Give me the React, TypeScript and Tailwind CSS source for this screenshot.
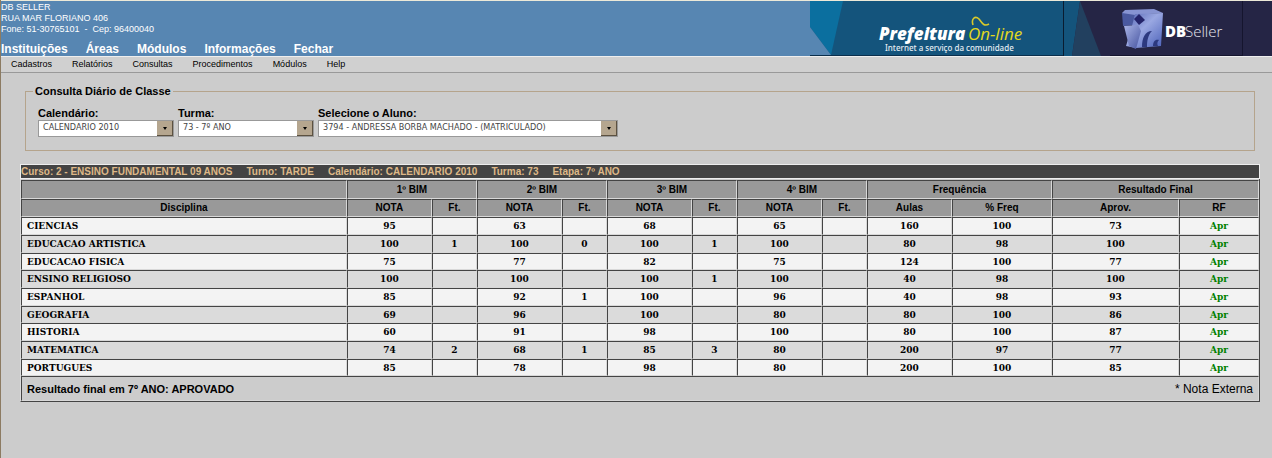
import React from "react";

const mainMenu = ["Instituições", "Áreas", "Módulos", "Informações", "Fechar"];
const subMenu = ["Cadastros", "Relatórios", "Consultas", "Procedimentos", "Módulos", "Help"];

const terms = ["1º BIM", "2º BIM", "3º BIM", "4º BIM"];

const rows: string[][] = [
  ["CIENCIAS", "95", "", "63", "", "68", "", "65", "", "160", "100", "73"],
  ["EDUCACAO ARTISTICA", "100", "1", "100", "0", "100", "1", "100", "", "80", "98", "100"],
  ["EDUCACAO FISICA", "75", "", "77", "", "82", "", "75", "", "124", "100", "77"],
  ["ENSINO RELIGIOSO", "100", "", "100", "", "100", "1", "100", "", "40", "98", "100"],
  ["ESPANHOL", "85", "", "92", "1", "100", "", "96", "", "40", "98", "93"],
  ["GEOGRAFIA", "69", "", "96", "", "100", "", "80", "", "80", "100", "86"],
  ["HISTORIA", "60", "", "91", "", "98", "", "100", "", "80", "100", "87"],
  ["MATEMATICA", "74", "2", "68", "1", "85", "3", "80", "", "200", "97", "77"],
  ["PORTUGUES", "85", "", "78", "", "98", "", "80", "", "200", "100", "85"],
];

const courseInfo = [
  "Curso: 2 - ENSINO FUNDAMENTAL 09 ANOS",
  "Turno: TARDE",
  "Calendário: CALENDARIO 2010",
  "Turma: 73",
  "Etapa: 7º ANO",
];

const cell = "border border-t-[#444] border-l-[#444] border-r-[#d8d8d8] border-b-[#d8d8d8] p-0";

function PrefeituraBanner() {
  return (
    <svg width="254" height="55" viewBox="0 0 254 55" className="block shrink-0">
      <rect width="254" height="55" fill="#14547c" />
      <path d="M0 0H33L21 54L0 26Z" fill="#0b6f9f" />
      <path d="M0 26L21 54V55H0Z" fill="#5786b2" />
      <path d="M0 54.5H254" stroke="#0b2f4c" />
      <path d="M253.5 0V55" stroke="#0a1c30" />
      <text x="69" y="39" fill="#fff" fontFamily="'Open Sans', sans-serif" fontSize="17" fontWeight="800" fontStyle="italic">
        Prefeitura
      </text>
      <text x="158" y="39" fill="#e3d91c" fontFamily="'Open Sans', sans-serif" fontSize="17" fontStyle="italic">
        On-line
      </text>
      <path d="M163 24C161 18 165 14 169 18C172 22 174 26 179 23" fill="none" stroke="#d9c92a" strokeWidth="1.6" />
      <text x="75" y="50" fill="#e4edf3" fontFamily="'Noto Sans', sans-serif" fontSize="8" fontWeight="500">
        Internet a serviço da comunidade
      </text>
    </svg>
  );
}

function DbSellerBanner() {
  return (
    <svg width="208" height="55" viewBox="0 0 208 55" className="block shrink-0">
      <defs>
        <linearGradient id="cube" x1="0" y1="0" x2="1" y2="1">
          <stop offset="0" stopColor="#5262b0" />
          <stop offset="0.45" stopColor="#9aa8e2" />
          <stop offset="1" stopColor="#4a60b8" />
        </linearGradient>
        <linearGradient id="side" x1="0" y1="0" x2="1" y2="1">
          <stop offset="0" stopColor="#a9b4e6" />
          <stop offset="1" stopColor="#4654a0" />
        </linearGradient>
      </defs>
      <rect width="208" height="55" fill="#252545" />
      <path d="M0 0H16L8 55H0Z" fill="#14547c" />
      <path d="M16 0L37 55H8Z" fill="#22405f" />
      <path d="M178.500 0V55M46 54.500H179" stroke="#15152e" />
      <path d="M58 12L71 10V24L59 25Z" fill="#4a599f" />
      <path d="M58 12L61 9L90 8L99 12L71 14Z" fill="#8794d2" />
      <path d="M71 13L99 12L97 45L72 47L62 45L68 25Z" fill="url(#cube)" />
      <path d="M60 25L74 24L77 30L72 48L65 45Z" fill="url(#side)" />
      <path d="M75 13L81 19L75 24L70 18Z" fill="#24246a" />
      <path d="M78 46C78 37 81 30 88 30C84 34 83 40 83 46ZM89 45C89 41 91 38 95 39C93 41 93 43 94 45Z" fill="#2c397f" />
      <text x="101" y="36" fill="#fff" fontFamily="'Open Sans', sans-serif" fontSize="15" fontWeight="800">
        DB
      </text>
      <text x="121" y="36" fill="#e6e6ee" fontFamily="'Open Sans', sans-serif" fontSize="15" fontWeight="300">
        Seller
      </text>
    </svg>
  );
}

function SelectField({ id, label, value, width }: { id: string; label: string; value: string; width: string }) {
  return (
    <div className={width}>
      <label htmlFor={id} className="block text-[11px] leading-[13px] font-bold">
        {label}
      </label>
      <div className="relative">
        <select
          id={id}
          defaultValue={value}
          className="block h-[17px] w-full appearance-none rounded-none border border-[#999] bg-white pr-4 pb-[3px] pl-1 font-['DejaVu_Sans_Condensed','DejaVu_Sans',sans-serif] text-[9px] leading-[12px] text-[#444]"
        >
          <option>{value}</option>
        </select>
        <span className="pointer-events-none absolute top-px right-px flex h-[15px] w-4 items-center justify-center border-r border-b border-[#5c5140] bg-[#b5a68f]">
          <svg width="4" height="3" viewBox="0 0 4 3">
            <path d="M0 0H4L2 3Z" fill="#000" />
          </svg>
        </span>
      </div>
    </div>
  );
}

export default function App() {
  return (
    <div className="min-h-screen border-l border-[#8c7b62] bg-[#ccc] font-['Liberation_Sans',Arial,sans-serif] text-black">
      <header className="flex justify-between border-t border-[#ece9d8] bg-[#5786b2]">
        <div className="flex flex-col justify-between pt-px text-white">
          <address className="text-[9px] leading-[11px] whitespace-pre not-italic">
            <p>DB SELLER</p>
            <p>RUA MAR FLORIANO 406</p>
            <p>Fone: 51-30765101  -  Cep: 96400040</p>
          </address>
          <nav className="flex gap-[18px] text-[12px] leading-[14px] font-bold">
            {mainMenu.map((item) => (
              <a key={item} href="#">
                {item}
              </a>
            ))}
          </nav>
        </div>
        <div className="flex">
          <PrefeituraBanner />
          <DbSellerBanner />
        </div>
      </header>

      <nav className="flex h-[17px] gap-5 border-t border-b border-t-[#eee] border-b-[#999] bg-[#d0d0d0] pl-[10px] text-[9px] leading-[15px]">
        {subMenu.map((item) => (
          <a key={item} href="#">
            {item}
          </a>
        ))}
      </nav>

      <main className="pt-3 pr-3 pl-[19px]">
        <fieldset className="mr-[5px] ml-[5px] border border-[#b5a48c] px-3 pt-[9px] pb-[13px]">
          <legend className="-ml-[5px] px-[2px] text-[11px] leading-[13px] font-bold">Consulta Diário de Classe</legend>
          <div className="flex gap-1">
            <SelectField id="calendario" label="Calendário:" value="CALENDARIO 2010" width="w-[136px]" />
            <SelectField id="turma" label="Turma:" value="73 - 7º ANO" width="w-[136px]" />
            <SelectField id="aluno" label="Selecione o Aluno:" value="3794 - ANDRESSA BORBA MACHADO - (MATRICULADO)" width="w-[300px]" />
          </div>
        </fieldset>

        <section className="mt-[13px]">
          <h2 className="flex gap-[14px] border border-[#eee] bg-[#444] text-[10px] leading-[13px] font-bold text-[#deb887]">
            {courseInfo.map((item) => (
              <span key={item}>{item}</span>
            ))}
          </h2>
          <div className="border-r border-b border-l border-r-[#444] border-b-[#444] border-l-[#ddd] pt-px">
            <table className="w-full table-fixed border-separate border-spacing-0 text-center text-[10px] leading-[14px] font-bold">
              <colgroup>
                <col />
                {terms.map((term) => (
                  <React.Fragment key={term}>
                    <col className="w-[85px]" />
                    <col className="w-[45px]" />
                  </React.Fragment>
                ))}
                <col className="w-[85px]" />
                <col className="w-[100px]" />
                <col className="w-[127px]" />
                <col className="w-[80px]" />
              </colgroup>
              <thead className="bg-[#999]">
                <tr className="h-[19px]">
                  <th className={cell}></th>
                  {terms.map((term) => (
                    <th key={term} colSpan={2} className={cell}>
                      {term}
                    </th>
                  ))}
                  <th colSpan={2} className={cell}>
                    Frequência
                  </th>
                  <th colSpan={2} className={cell}>
                    Resultado Final
                  </th>
                </tr>
                <tr className="h-[18px]">
                  <th className={cell}>Disciplina</th>
                  {terms.map((term) => (
                    <React.Fragment key={term}>
                      <th className={cell}>NOTA</th>
                      <th className={cell}>Ft.</th>
                    </React.Fragment>
                  ))}
                  <th className={cell}>Aulas</th>
                  <th className={cell}>% Freq</th>
                  <th className={cell}>Aprov.</th>
                  <th className={cell}>RF</th>
                </tr>
              </thead>
              <tbody className="font-['DejaVu_Serif',serif] text-[9px]">
                {rows.map((row) => (
                  <tr key={row[0]} className="h-[18px] odd:bg-[#f3f3f3] even:bg-[#dbdbdb] nth-[3n]:h-[17px]">
                    {row.map((value, i) => (
                      <td key={i} className={i === 0 ? `${cell} pl-[5px] text-left` : cell}>
                        {value}
                      </td>
                    ))}
                    <td className={`${cell} text-[#008000]`}>Apr</td>
                  </tr>
                ))}
              </tbody>
              <tfoot>
                <tr className="h-[25px]">
                  <td colSpan={13} className={cell}>
                    <div className="flex justify-between px-[5px] text-[11px]">
                      <span>Resultado final em 7º ANO: APROVADO</span>
                      <span className="text-[12px] font-normal">* Nota Externa</span>
                    </div>
                  </td>
                </tr>
              </tfoot>
            </table>
          </div>
        </section>
      </main>
    </div>
  );
}
